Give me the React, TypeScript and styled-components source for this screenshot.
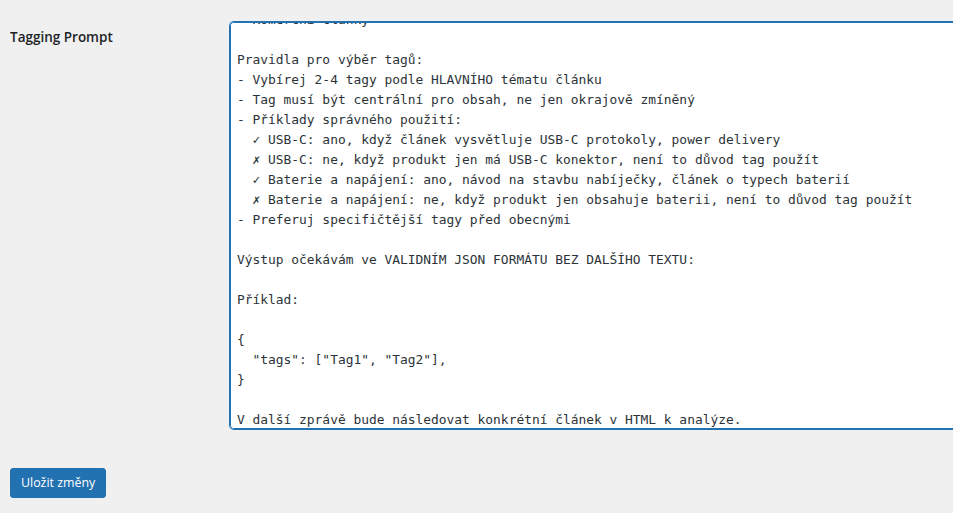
import React, { useEffect, useRef } from 'react';
import styled, { createGlobalStyle } from 'styled-components';

const GlobalStyle = createGlobalStyle`
  html, body {
    margin: 0;
    padding: 0;
    background: #f0f0f1;
    overflow: hidden;
  }
  body {
    font-family: "Open Sans", "Noto Sans", sans-serif;
    color: #1d2327;
  }
`;

const Wrap = styled.form`
  padding: 7px 0 0 10px;
`;

const FormRow = styled.div`
  display: grid;
  grid-template-columns: 200px 1fr;
  column-gap: 10px;
  padding-bottom: 15px;
`;

const FieldLabel = styled.label`
  padding-top: 22px;
  font-size: 13.5px;
  font-weight: 600;
  line-height: 1.3;
  color: #1d2327;
`;

const FieldCell = styled.div`
  padding: 15px 0 0 10px;
`;

const PromptArea = styled.textarea`
  display: block;
  box-sizing: border-box;
  width: 1000px;
  height: 407px;
  margin: 0;
  padding: 2px 6px;
  border: 1px solid #2271b1;
  border-radius: 4px;
  box-shadow: 0 0 0 1px #2271b1;
  outline: none;
  background: #fff;
  color: #2c3338;
  font-family: "DejaVu Sans Mono", "Liberation Mono", monospace;
  font-size: 12.9px;
  line-height: 20px;
  white-space: pre;
  resize: vertical;
`;

const SubmitRow = styled.p`
  margin: 0;
  padding-top: 24px;
`;

const PrimaryButton = styled.button`
  box-sizing: border-box;
  height: 30px;
  padding: 0 10px;
  background: #2271b1;
  border: 1px solid #2271b1;
  border-radius: 3px;
  color: #fff;
  font-family: "Open Sans", "Noto Sans", sans-serif;
  font-size: 12.4px;
  line-height: 28px;
  cursor: pointer;

  &:hover {
    background: #135e96;
    border-color: #135e96;
  }
`;

const prompt = `Jsi expert na kategorizaci technických článků.
Na základě obsahu článku vyber vhodné tagy z tohoto seznamu:
- Arduino
- ESP32
- USB-C
- Baterie a napájení
- Recenze
- Komerční články

Pravidla pro výběr tagů:
- Vybírej 2-4 tagy podle HLAVNÍHO tématu článku
- Tag musí být centrální pro obsah, ne jen okrajově zmíněný
- Příklady správného použití:
  ✓ USB-C: ano, když článek vysvětluje USB-C protokoly, power delivery
  ✗ USB-C: ne, když produkt jen má USB-C konektor, není to důvod tag použít
  ✓ Baterie a napájení: ano, návod na stavbu nabíječky, článek o typech baterií
  ✗ Baterie a napájení: ne, když produkt jen obsahuje baterii, není to důvod tag použít
- Preferuj specifičtější tagy před obecnými

Výstup očekávám ve VALIDNÍM JSON FORMÁTU BEZ DALŠÍHO TEXTU:

Příklad:

{
  "tags": ["Tag1", "Tag2"],
}

V další zprávě bude následovat konkrétní článek v HTML k analýze.`;

const App: React.FC = () => {
  const areaRef = useRef<HTMLTextAreaElement>(null);

  useEffect(() => {
    if (areaRef.current) areaRef.current.scrollTop = 155;
  }, []);

  return (
    <>
      <GlobalStyle />
      <Wrap onSubmit={e => e.preventDefault()}>
        <FormRow>
          <FieldLabel htmlFor="tagging_prompt">Tagging Prompt</FieldLabel>
          <FieldCell>
            <PromptArea
              id="tagging_prompt"
              ref={areaRef}
              defaultValue={prompt}
              spellCheck={false}
            />
          </FieldCell>
        </FormRow>
        <SubmitRow>
          <PrimaryButton type="submit">Uložit změny</PrimaryButton>
        </SubmitRow>
      </Wrap>
    </>
  );
};

export default App;
